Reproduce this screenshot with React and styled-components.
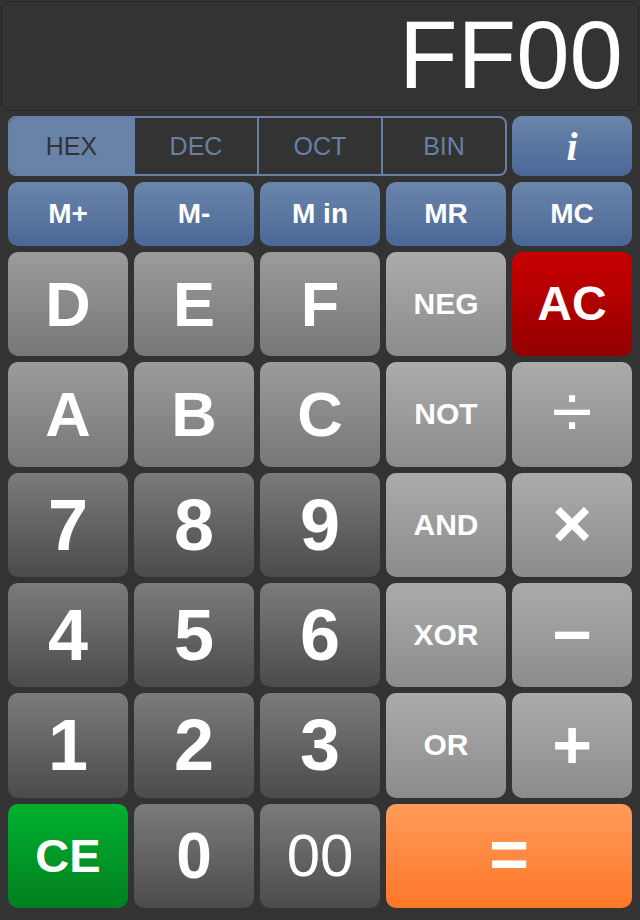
import React from "react";
import styled, { createGlobalStyle, css } from "styled-components";

const Global = createGlobalStyle`
  html, body { margin: 0; padding: 0; background: #333333; }
  body { font-family: "Liberation Sans", Arial, sans-serif; }
  * { box-sizing: border-box; }
`;

const Screen = styled.div`
  width: 640px;
  height: 920px;
  background: #333333;
  display: flex;
  flex-direction: column;
  overflow: hidden;
`;

const Display = styled.div`
  margin: 1px 1px 0 1px;
  height: 110px;
  border: 1px solid #232323;
  border-radius: 10px;
  background: #333333;
  display: flex;
  justify-content: flex-end;
  align-items: flex-start;
  padding: 5px 15px 0 0;
`;

const Readout = styled.div`
  font-family: "Liberation Sans", Arial, sans-serif;
  font-size: 96px;
  line-height: 96px;
  color: #ffffff;
`;

const Pad = styled.div`
  flex: 1;
  display: grid;
  grid-template-columns: repeat(5, 120px);
  grid-template-rows: 60px 64px repeat(6, 1fr);
  column-gap: 6px;
  row-gap: 6px;
  padding: 5px 8px 12px 8px;
`;

const Segmented = styled.div`
  grid-column: span 4;
  display: grid;
  grid-template-columns: 123px 1fr 1fr 1fr;
  border: 2px solid #6680a6;
  border-radius: 8px;
  overflow: hidden;
  margin-right: -1px;
`;

const Segment = styled.div`
  display: flex;
  align-items: center;
  justify-content: center;
  font-size: 25px;
  color: ${(p) => (p.$active ? "#333333" : "#6680a6")};
  background: ${(p) => (p.$active ? "#6882a8" : "transparent")};
  border-left: ${(p) => (p.$first ? "none" : "2px solid #6680a6")};
`;

const palettes = {
  blue: ["#6b85aa", "#4a6898"],
  hex: ["#9b9b9b", "#777777"],
  digit: ["#7b7b7b", "#4b4b4b"],
  op: ["#ababab", "#8c8c8c"],
  red: ["#c90000", "#940000"],
  green: ["#00b22f", "#007f1f"],
  orange: ["#ff9b5c", "#ff7727"],
};

const Key = styled.div`
  display: flex;
  align-items: center;
  justify-content: center;
  border-radius: 10px;
  color: #ffffff;
  font-family: "Liberation Sans", Arial, sans-serif;
  font-weight: ${(p) => (p.$light ? 400 : 700)};
  font-size: ${(p) => p.$size || 30}px;
  line-height: 1;
  background: linear-gradient(
    to bottom,
    ${(p) => palettes[p.$tone][0]},
    ${(p) => palettes[p.$tone][1]}
  );
  ${(p) =>
    p.$span &&
    css`
      grid-column: span ${p.$span};
    `}
  user-select: none;
`;

const InfoGlyph = styled.span`
  font-family: "Liberation Serif", "Times New Roman", serif;
  font-style: italic;
  font-weight: 700;
  font-size: 40px;
  line-height: 1;
  margin-top: 2px;
`;

const Symbol = styled.span`
  display: block;
  margin-top: ${(p) => p.$shift || 0}px;
`;

const keys = [
  { l: "D", t: "hex", s: 63 },
  { l: "E", t: "hex", s: 63 },
  { l: "F", t: "hex", s: 63 },
  { l: "NEG", t: "op", s: 30 },
  { l: "AC", t: "red", s: 48 },
  { l: "A", t: "hex", s: 63 },
  { l: "B", t: "hex", s: 63 },
  { l: "C", t: "hex", s: 63 },
  { l: "NOT", t: "op", s: 30 },
  { l: "\u00F7", t: "op", s: 74, light: true, shift: -4 },
  { l: "7", t: "digit", s: 72 },
  { l: "8", t: "digit", s: 72 },
  { l: "9", t: "digit", s: 72 },
  { l: "AND", t: "op", s: 30 },
  { l: "\u00D7", t: "op", s: 68, shift: -3 },
  { l: "4", t: "digit", s: 72 },
  { l: "5", t: "digit", s: 72 },
  { l: "6", t: "digit", s: 72 },
  { l: "XOR", t: "op", s: 30 },
  { l: "\u2212", t: "op", s: 68, shift: -3 },
  { l: "1", t: "digit", s: 72 },
  { l: "2", t: "digit", s: 72 },
  { l: "3", t: "digit", s: 72 },
  { l: "OR", t: "op", s: 30 },
  { l: "+", t: "op", s: 68, shift: -3 },
  { l: "CE", t: "green", s: 47 },
  { l: "0", t: "digit", s: 64 },
  { l: "00", t: "digit", s: 60, light: true },
  { l: "=", t: "orange", s: 68, span: 2, shift: -3 },
];

export default function App() {
  return (
    <Screen>
      <Global />
      <Display>
        <Readout>FF00</Readout>
      </Display>
      <Pad>
        <Segmented>
          <Segment $active $first>HEX</Segment>
          <Segment>DEC</Segment>
          <Segment>OCT</Segment>
          <Segment>BIN</Segment>
        </Segmented>
        <Key $tone="blue">
          <InfoGlyph>i</InfoGlyph>
        </Key>
        {["M+", "M-", "M in", "MR", "MC"].map((m) => (
          <Key key={m} $tone="blue" $size={28}>
            {m}
          </Key>
        ))}
        {keys.map((k) => (
          <Key
            key={k.l}
            $tone={k.t}
            $size={k.s}
            $light={k.light}
            $span={k.span}
          >
            <Symbol $shift={k.shift}>{k.l}</Symbol>
          </Key>
        ))}
      </Pad>
    </Screen>
  );
}
